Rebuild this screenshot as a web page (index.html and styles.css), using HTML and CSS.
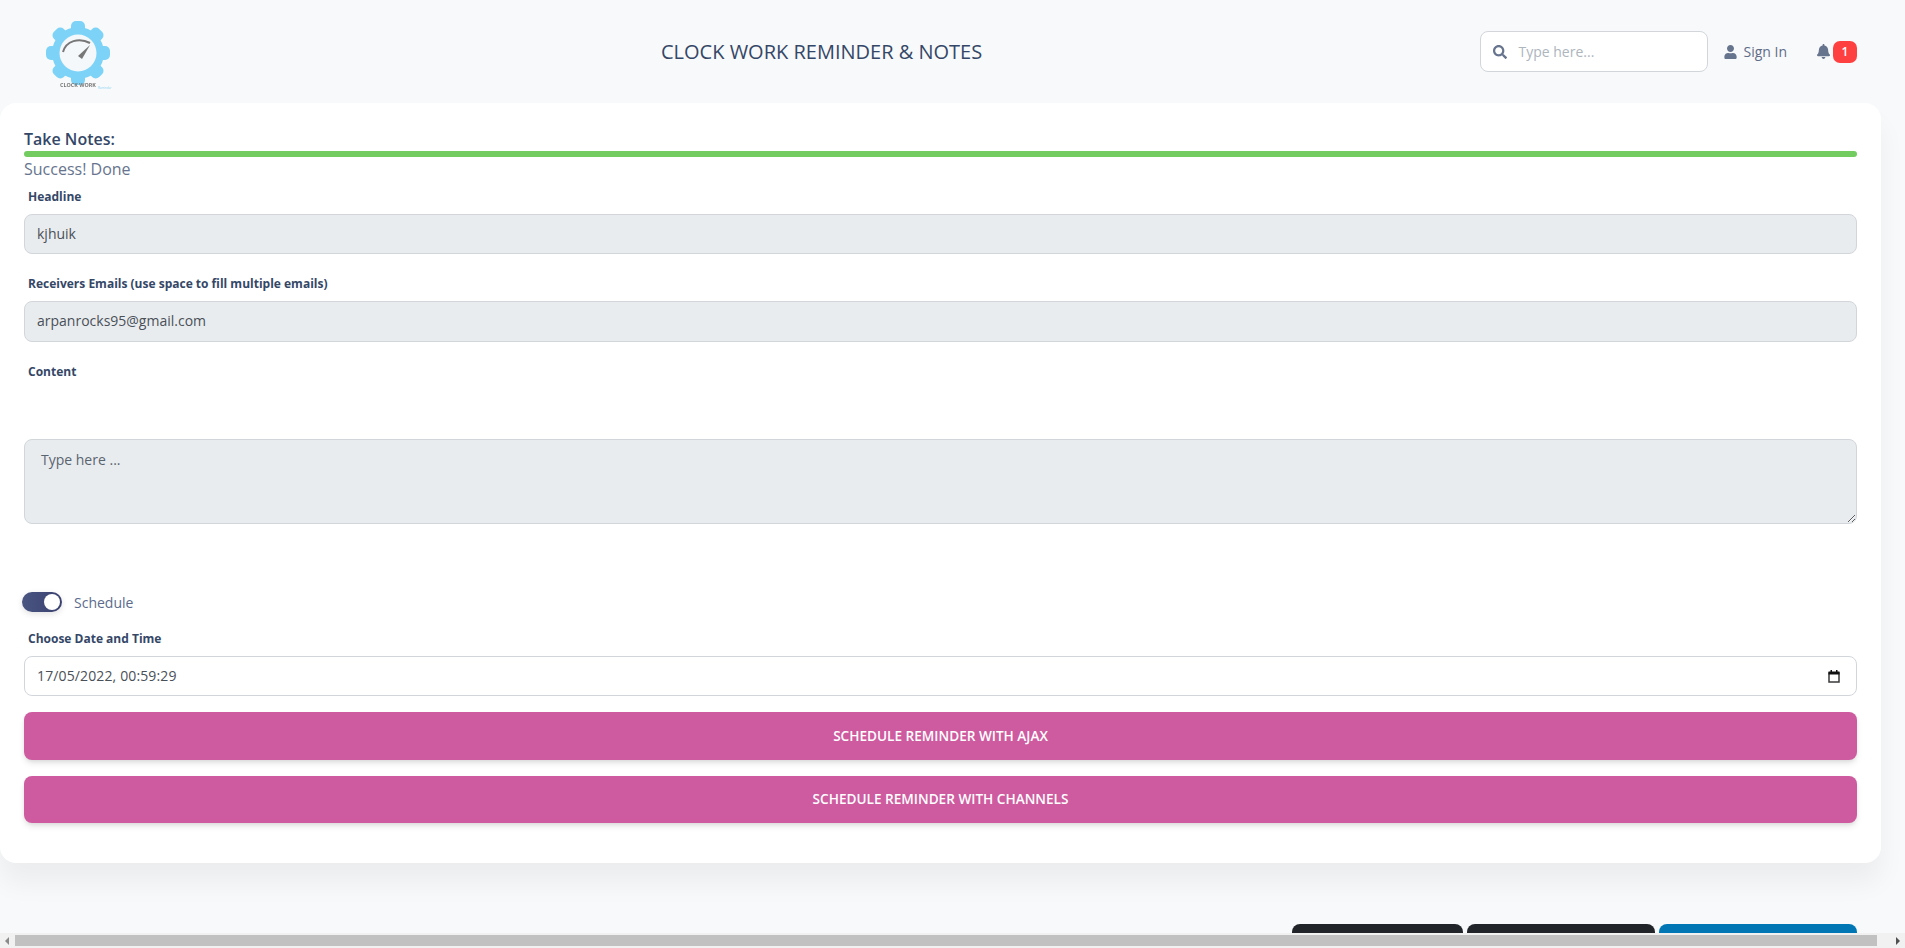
FILE: index.html
```html
<!DOCTYPE html>
<html lang="en">
<head>
<meta charset="utf-8">
<title>Clock Work Reminder &amp; Notes</title>
<link rel="stylesheet" href="styles.css">
</head>
<body>
<div class="page">
  <header class="topbar">
    <div class="logo">
      <svg width="68" height="76" viewBox="0 0 68 76">
        <g fill="#7dd3f7">
          <circle cx="32" cy="34" r="26"/>
          <rect x="25" y="2" width="14" height="64" rx="5"/>
          <rect x="25" y="2" width="14" height="64" rx="5" transform="rotate(45 32 34)"/>
          <rect x="25" y="2" width="14" height="64" rx="5" transform="rotate(90 32 34)"/>
          <rect x="25" y="2" width="14" height="64" rx="5" transform="rotate(135 32 34)"/>
        </g>
        <circle cx="32" cy="34" r="18.500" fill="#f4f8fb"/>
        <path d="M17 33 C20 22 33 18 44 24" fill="none" stroke="#777" stroke-width="2"/>
        <path d="M32 37 L44 26 L36 40 Z" fill="#777"/>
        <text x="14" y="68" class="logo-text">CLOCK WORK</text>
        <text x="52" y="70" class="logo-sub">Reminder</text>
      </svg>
    </div>
    <h1 class="title">CLOCK WORK REMINDER &amp; NOTES</h1>
    <div class="tools">
      <label class="search">
        <svg class="search-icon" width="14" height="14" viewBox="0 0 512 512"><path fill="#67748e" d="M505 442.700L405.300 343c-4.500-4.500-10.600-7-17-7H372c27.600-35.300 44-79.700 44-128C416 93.100 322.900 0 208 0S0 93.100 0 208s93.100 208 208 208c48.300 0 92.700-16.400 128-44v16.300c0 6.400 2.500 12.500 7 17l99.700 99.700c9.400 9.400 24.600 9.400 33.900 0l28.300-28.300c9.400-9.400 9.400-24.600.1-34zM208 336c-70.700 0-128-57.200-128-128 0-70.700 57.200-128 128-128 70.700 0 128 57.200 128 128 0 70.700-57.200 128-128 128z"/></svg>
        <input class="search-input" type="text" placeholder="Type here...">
      </label>
      <a class="signin">
        <svg width="13" height="14" viewBox="0 0 448 512"><path fill="#67748e" d="M224 256c70.700 0 128-57.300 128-128S294.700 0 224 0 96 57.300 96 128s57.300 128 128 128zm89.600 32h-16.700c-22.200 10.200-46.900 16-72.900 16s-50.600-5.800-72.900-16h-16.700C60.200 288 0 348.200 0 422.400V464c0 26.500 21.500 48 48 48h352c26.500 0 48-21.500 48-48v-41.600c0-74.200-60.200-134.400-134.400-134.400z"/></svg>
        <span>Sign In</span>
      </a>
      <div class="notify">
        <svg width="13" height="15" viewBox="0 0 448 512"><path fill="#67748e" d="M224 512c35.320 0 63.970-28.650 63.970-64H160.030c0 35.350 28.650 64 63.970 64zm215.390-149.710c-19.320-20.760-55.470-51.990-55.470-154.290 0-77.700-54.480-139.900-127.940-155.160V32c0-17.670-14.320-32-31.980-32s-31.980 14.330-31.980 32v20.840C118.560 68.100 64.080 130.300 64.080 208c0 102.300-36.150 133.530-55.470 154.290-6 6.450-8.660 14.160-8.610 21.710.11 16.400 12.980 32 32.100 32h383.800c19.120 0 32-15.600 32.100-32 .05-7.550-2.610-15.270-8.610-21.710z"/></svg>
        <span class="badge">1</span>
      </div>
    </div>
  </header>

  <main class="card">
    <div class="card-heading">Take Notes:</div>
    <div class="progress"></div>
    <div class="status">Success! Done</div>

    <label class="field-label field-label-headline">Headline</label>
    <input class="control control-filled" type="text" value="kjhuik" readonly>

    <label class="field-label field-label-emails">Receivers Emails (use space to fill multiple emails)</label>
    <input class="control control-filled control-emails" type="text" value="arpanrocks95@gmail.com" readonly>

    <label class="field-label field-label-content">Content</label>
    <textarea class="control control-filled area" placeholder="Type here ..."></textarea>

    <div class="switch-row">
      <span class="switch"><span class="knob"></span></span>
      <span class="switch-text">Schedule</span>
    </div>

    <label class="field-label field-label-date">Choose Date and Time</label>
    <div class="date-wrap">
      <input class="control control-date" type="text" value="17/05/2022, 00:59:29">
      <svg class="calendar" width="12" height="13" viewBox="0 0 12 13"><path fill="none" stroke="#3a3a3a" stroke-width="1.500" d="M1 3h10v9H1z"/><path fill="#111" d="M0.500 1.500h11V4.500h-11z"/><path fill="#111" d="M2.500 0h1.500v2H2.500zM8 0h1.500v2H8z"/></svg>
    </div>

    <button class="action" type="button">Schedule Reminder with Ajax</button>
    <button class="action action-last" type="button">Schedule Reminder with Channels</button>
  </main>

  <div class="footer-actions">
    <button class="foot foot-dark-a" type="button"></button>
    <button class="foot foot-dark-b" type="button"></button>
    <button class="foot foot-blue" type="button"></button>
  </div>
</div>

<div class="hscroll" aria-hidden="true">
  <span class="arrow arrow-left"></span>
  <span class="thumb"></span>
  <span class="arrow arrow-right"></span>
</div>
</body>
</html>
```
FILE: styles.css
```css
* { box-sizing: border-box; }
html, body { margin: 0; height: 100%; overflow: hidden; }
body {
  background: #f8f9fa;
  font-family: "Open Sans", sans-serif;
  color: #344767;
}
.page { height: 948px; overflow: hidden; }

.topbar {
  height: 103px;
  padding: 0 48px 0 46px;
  display: flex;
  align-items: center;
}
.logo { width: 68px; height: 76px; margin-top: 11px; }
.logo svg { display: block; overflow: visible; filter: blur(0.4px); }
.logo-text { font: 700 5.400px "Open Sans", sans-serif; fill: #777; }
.logo-sub { font: 400 3px "Open Sans", sans-serif; fill: #8fd4f2; }
.title {
  margin: 0 0 0 547px;
  font-size: 20px;
  font-weight: 400;
  line-height: 24px;
  color: #344767;
}
.tools { margin-left: auto; display: flex; align-items: center; }
.search {
  width: 228px;
  height: 41px;
  display: flex;
  align-items: center;
  gap: 11px;
  padding: 0 12px;
  background: #fff;
  border: 1px solid #d2d6da;
  border-radius: 8px;
}
.search-icon { flex: none; }
.search-input {
  flex: 1;
  min-width: 0;
  border: 0;
  outline: 0;
  padding: 0;
  background: transparent;
  font: 400 14px "Open Sans", sans-serif;
  color: #495057;
}
.search-input::placeholder { color: #adb5bd; opacity: 1; }
.signin {
  margin-left: 16px;
  display: flex;
  align-items: center;
  gap: 6px;
  font-size: 14px;
  font-weight: 400;
  color: #5f6c88;
}
.notify { margin-left: 30px; display: flex; align-items: center; gap: 3px; }
.badge {
  width: 24px;
  height: 22px;
  border-radius: 7px;
  background: #ff4040;
  color: #fff;
  font: 600 12px/22px "Open Sans", sans-serif;
  text-align: center;
}

.card {
  width: 1881px;
  height: 760px;
  padding: 24px 24px 0;
  background: #fff;
  border-radius: 16px;
  box-shadow: 0 20px 27px 0 rgba(0, 0, 0, 0.05);
}
.card-heading { font-size: 16px; font-weight: 600; line-height: 24px; color: #344767; }
.progress { height: 6px; border-radius: 3px; background: #72cc5f; }
.status { font-size: 16px; line-height: 24px; color: #67748e; }
.field-label {
  display: block;
  margin: 6px 0 10px 4px;
  font-size: 12px;
  font-weight: 700;
  line-height: 15px;
  color: #344767;
}
.field-label-headline { margin-top: 8px; }
.field-label-emails { margin-top: 22px; }
.field-label-content { margin-top: 22px; margin-bottom: 60px; }
.field-label-date { margin-top: 19px; }
.control {
  display: block;
  width: 100%;
  height: 40px;
  padding: 0 13px 0 12px;
  border: 1px solid #d2d6da;
  border-radius: 8px;
  outline: 0;
  background: #fff;
  font: 400 14px "Open Sans", sans-serif;
  color: #495057;
}
.control-filled { background: #e9ecef; padding-bottom: 2px; }
.control-emails { height: 41px; }
.control-date { letter-spacing: 0.13px; padding-bottom: 2px; }
.area { height: 85px; padding: 10px 16px; resize: vertical; }
.area::placeholder { color: #5a6470; opacity: 1; }

.switch-row { margin: 68px 0 0 -2px; display: flex; align-items: center; gap: 12px; height: 20px; }
.switch {
  width: 40px;
  height: 20px;
  padding: 2px 2px 2px 22px;
  border-radius: 10px;
  background: linear-gradient(90deg, #4a5582, #3a416f);
  box-shadow: 0 2px 6px rgba(0, 0, 0, 0.12);
}
.knob { display: block; width: 16px; height: 16px; border-radius: 50%; background: #fff; }
.switch-text { font-size: 14px; color: #5c6b8c; }

.date-wrap { position: relative; }
.calendar { position: absolute; right: 17px; top: 14px; }

.action {
  display: block;
  width: 100%;
  height: 48px;
  margin-top: 16px;
  padding: 0 0 2px;
  border: 0;
  border-radius: 8px;
  background: #ce5a9f;
  color: #fff;
  font: 600 13.600px "Open Sans", sans-serif;
  text-transform: uppercase;
  box-shadow: 0 4px 7px -1px rgba(0, 0, 0, 0.11), 0 2px 4px -1px rgba(0, 0, 0, 0.07);
}
.action-last { height: 47px; }

.footer-actions {
  margin-top: 61px;
  padding-right: 48px;
  display: flex;
  justify-content: flex-end;
}
.foot { height: 40px; border: 0; border-radius: 8px; }
.foot-dark-a { width: 171px; margin-right: 4px; background: #212529; }
.foot-dark-b { width: 188px; margin-right: 4px; background: #212529; }
.foot-blue { width: 198px; background: #0077b5; }

.hscroll {
  position: fixed;
  left: 0;
  right: 0;
  bottom: 0;
  height: 15px;
  padding: 2px 0 2px 15px;
  background: #f1f1f1;
}
.thumb { display: block; width: 1862px; height: 11px; background: #c1c1c1; }
.arrow { position: absolute; top: 4px; width: 0; height: 0; border-style: solid; border-width: 4px 0 4px 0; border-color: transparent; }
.arrow-left { left: 5px; border-right: 4px solid #8a8a8a; }
.arrow-right { right: 5px; border-left: 4px solid #505050; }
```
